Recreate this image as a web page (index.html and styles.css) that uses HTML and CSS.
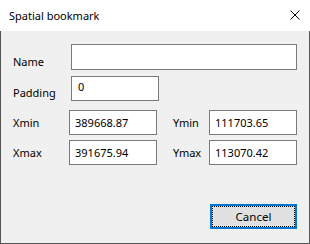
FILE: index.html
```html
<!DOCTYPE html>
<html lang="en">
<head>
    <meta charset="UTF-8">
    <meta name="viewport" content="width=device-width, initial-scale=1.0">
    <title>Spatial bookmark</title>
    <link rel="stylesheet" href="styles.css">
</head>
<body>
    <div class="dialog">
        <div class="titlebar">
            <span class="title">Spatial bookmark</span>
            <svg class="close" width="10" height="10" viewBox="0 0 10 10">
                <path d="M0.5 0.5 L9.5 9.5 M9.5 0.5 L0.5 9.5" stroke="#000" stroke-width="1" fill="none"/>
            </svg>
        </div>
        <div class="content">
            <div class="row row-name">
                <label class="label label-low" for="name">Name</label>
                <input type="text" id="name" class="field field-wide">
            </div>
            <div class="row row-padding">
                <label class="label label-low" for="padding">Padding</label>
                <input type="text" id="padding" class="field field-pad" value="0">
            </div>
            <div class="row row-x">
                <label class="label label-x" for="xmin">Xmin</label>
                <input type="text" id="xmin" class="field" value="389668.87">
                <label class="label label-y" for="ymin">Ymin</label>
                <input type="text" id="ymin" class="field" value="111703.65">
            </div>
            <div class="row row-x2">
                <label class="label label-x" for="xmax">Xmax</label>
                <input type="text" id="xmax" class="field" value="391675.94">
                <label class="label label-y" for="ymax">Ymax</label>
                <input type="text" id="ymax" class="field" value="113070.42">
            </div>
            <div class="buttons">
                <button class="cancel">Cancel</button>
            </div>
        </div>
    </div>
</body>
</html>
```

FILE: styles.css
```css
body {
    margin: 0;
    background-color: #f0f0f0;
    font-family: "Noto Sans", sans-serif;
    font-size: 11px;
    color: #000;
}
.dialog {
    width: 310px;
    height: 244px;
    display: flex;
    flex-direction: column;
}
.titlebar {
    height: 31px;
    background-color: #fff;
    display: flex;
    align-items: center;
    justify-content: space-between;
    padding: 0 10px 1px 9px;
    box-sizing: border-box;
    flex-shrink: 0;
}
.title {
    font-size: 11px;
}
.close {
    display: block;
}
.content {
    flex: 1;
    border: 1px solid #555;
    border-top: none;
    padding: 13px 12px 0 12px;
    background-color: #f0f0f0;
}
.row {
    display: flex;
    align-items: center;
}
.row-padding {
    margin-top: 6px;
}
.row-x {
    margin-top: 9px;
}
.row-x2 {
    margin-top: 5px;
}
.label {
    display: block;
    box-sizing: border-box;
}
.label-low {
    width: 58px;
    padding-top: 8px;
}
.label-x {
    width: 56px;
}
.label-y {
    width: 36px;
    margin-left: 16px;
}
.field {
    width: 88px;
    height: 25px;
    box-sizing: border-box;
    border: 1px solid #7a7a7a;
    background-color: #fff;
    padding: 0 0 1px 5px;
    margin: 0;
    font-family: "Noto Sans", sans-serif;
    font-size: 11px;
    color: #000;
    outline: none;
}
.field-wide {
    width: 226px;
    height: 26px;
}
.field-pad {
    padding: 0 0 5px 6px;
}
.buttons {
    display: flex;
    justify-content: flex-end;
    margin-top: 39px;
}
.cancel {
    width: 87px;
    height: 25px;
    box-sizing: border-box;
    border: 2px solid #0078d7;
    background-color: #e1e1e1;
    outline: 1px dotted #000;
    outline-offset: -3px;
    font-family: "Noto Sans", sans-serif;
    font-size: 11.5px;
    color: #000;
    padding: 0 0 1px 0;
}
```
